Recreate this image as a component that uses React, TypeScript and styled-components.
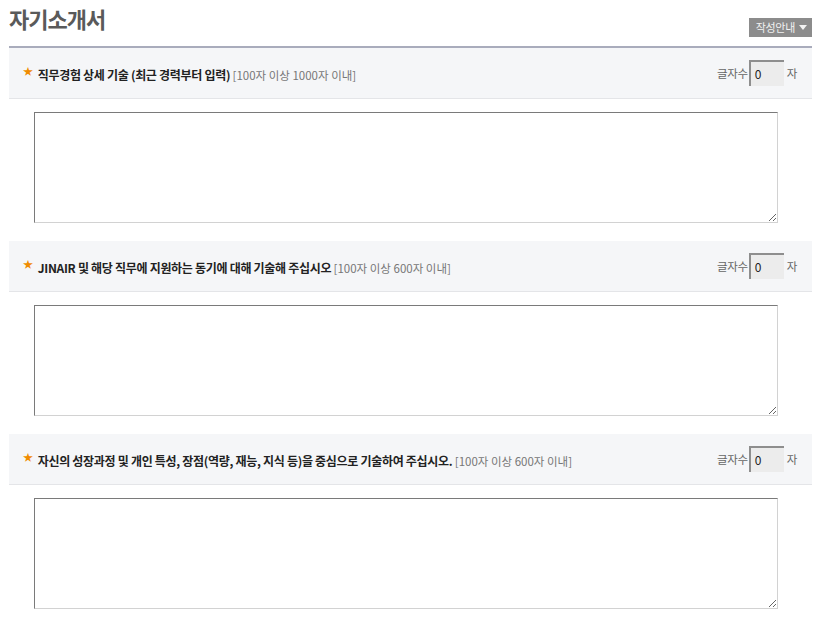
import styled, { createGlobalStyle } from "styled-components";

const questions = [
  { title: "직무경험 상세 기술 (최근 경력부터 입력)", limit: "[100자 이상 1000자 이내]" },
  { title: "JINAIR 및 해당 직무에 지원하는 동기에 대해 기술해 주십시오", limit: "[100자 이상 600자 이내]" },
  { title: "자신의 성장과정 및 개인 특성, 장점(역량, 재능, 지식 등)을 중심으로 기술하여 주십시오.", limit: "[100자 이상 600자 이내]" },
];

function App() {
  return (
    <Page>
      <GlobalStyle />
      <TopBar>
        <Title>자기소개서</Title>
        <GuideBtn>
          작성안내 <Caret />
        </GuideBtn>
      </TopBar>
      <List>
        {questions.map((q, i) => (
          <Item key={i}>
            <QHead>
              <QTitle>
                <Star>★</Star>
                <strong>{q.title}</strong> <Limit>{q.limit}</Limit>
              </QTitle>
              <Counter>
                글자수
                <CountBox>0</CountBox>
                <Unit>자</Unit>
              </Counter>
            </QHead>
            <Body>
              <Answer />
            </Body>
          </Item>
        ))}
      </List>
    </Page>
  );
}
export default App;

const GlobalStyle = createGlobalStyle`
  body {
    margin: 0;
    background: #fff;
    font-family: "Noto Sans CJK KR", "Noto Sans", sans-serif;
  }
`;

const Page = styled.div`
  width: 803px;
  padding: 0 4px 0 9px;
`;

const TopBar = styled.div`
  display: flex;
  justify-content: space-between;
  align-items: flex-end;
  height: 46px;
  border-bottom: 2px solid #a9acbc;
  box-sizing: content-box;
`;

const Title = styled.h2`
  margin: 0 0 14px;
  font-size: 22px;
  line-height: 28px;
  font-weight: 700;
  color: #5a5a5a;
  letter-spacing: -1px;
`;

const GuideBtn = styled.button`
  display: flex;
  align-items: center;
  gap: 4px;
  height: 19px;
  margin-bottom: 9px;
  padding: 0 5px 0 7px;
  border: 0;
  background: #8c8c8c;
  color: #f2f2f2;
  font-family: inherit;
  font-size: 11px;
  line-height: 19px;
  letter-spacing: -0.3px;
`;

const Caret = styled.span`
  width: 0;
  height: 0;
  border-left: 4px solid transparent;
  border-right: 4px solid transparent;
  border-top: 5px solid #f2f2f2;
`;

const List = styled.div`
  display: flex;
  flex-direction: column;
`;

const Item = styled.section``;

const QHead = styled.div`
  display: flex;
  justify-content: space-between;
  align-items: center;
  height: 50px;
  padding: 0 15px 0 14px;
  background: #f5f6f8;
  border-bottom: 1px solid #e4e5e8;
  box-sizing: content-box;
`;

const QTitle = styled.p`
  margin: 0;
  font-size: 12px;
  color: #222;
  letter-spacing: -0.3px;

  strong {
    font-weight: 700;
  }
`;

const Star = styled.span`
  display: inline-block;
  margin-right: 5px;
  font-size: 10px;
  color: #f08c00;
  vertical-align: 5px;
`;

const Limit = styled.span`
  color: #777;
  font-size: 11.5px;
  letter-spacing: 0;
`;

const Counter = styled.div`
  display: flex;
  align-items: center;
  font-size: 11.5px;
  color: #666;
  letter-spacing: -0.3px;
`;

const CountBox = styled.span`
  width: 29px;
  height: 24px;
  margin-left: 1px;
  padding-left: 4px;
  background: #ececec;
  border-top: 2px solid #8e8e8e;
  border-left: 2px solid #8e8e8e;
  font-size: 12px;
  line-height: 24px;
  color: #222;
`;

const Unit = styled.span`
  margin-left: 3px;
`;

const Body = styled.div`
  padding: 13px 0 18px 25px;
`;

const Answer = styled.textarea`
  display: block;
  width: 744px;
  height: 111px;
  margin: 0;
  box-sizing: border-box;
  border: 1px solid;
  border-color: #7a7a7a #d2d2d2 #d2d2d2 #7a7a7a;
  font-family: inherit;
`;
